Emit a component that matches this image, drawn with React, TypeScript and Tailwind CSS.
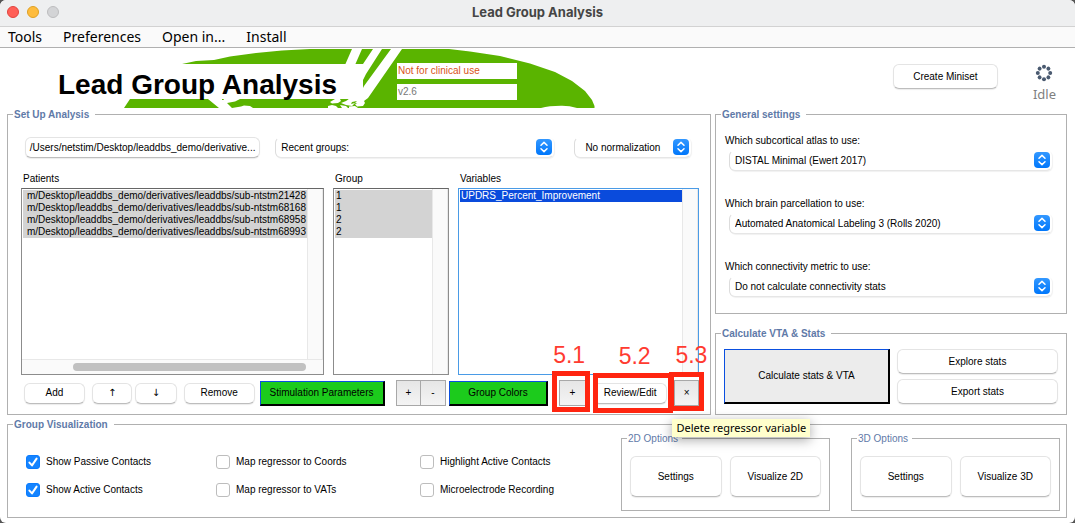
import React, { ReactNode } from "react";
import { clsx } from "clsx";

const patients = ["21428", "68168", "68958", "68993"];
const groups = ["1", "1", "2", "2"];

function Panel({ title, className, children, light }: { title: string; className?: string; children: ReactNode; light?: boolean }) {
  return (
    <fieldset className={clsx("min-w-0 border border-[#b0b0b0]", className)}>
      <legend
        className={clsx(
          "ml-[5px] h-[13px] pl-px leading-[13px] whitespace-nowrap text-[#5f7aa8]",
          light ? "pr-1 text-[10px]" : "pr-1.5 text-[10px] font-bold",
        )}
      >
        {title}
      </legend>
      {children}
    </fieldset>
  );
}

function PushButton({ children, className, label }: { children: ReactNode; className?: string; label?: string }) {
  return (
    <button
      type="button"
      aria-label={label}
      className={clsx(
        "min-w-0 rounded-md border border-[#e4e4e4] border-b-[#bdbdbd] bg-white p-0 text-center whitespace-nowrap shadow-[0_1px_1px_rgba(0,0,0,0.08)]",
        className,
      )}
    >
      {children}
    </button>
  );
}

function SquareButton({ children, label, className }: { children: ReactNode; label: string; className?: string }) {
  return (
    <button
      type="button"
      aria-label={label}
      className={clsx("h-[26px] min-w-0 border border-[#a8a8a8] bg-linear-to-b from-[#e6e6e6] to-[#f4f4f4] p-0", className)}
    >
      {children}
    </button>
  );
}

const raised = "min-w-0 border-t border-r-2 border-b-2 border-l border-t-[#0a4fe0] border-l-[#0a4fe0] border-r-black border-b-black p-0 whitespace-nowrap";

function Popup({ value, label, className, pad = "pl-[5px]", id }: { value: string; label?: string; className?: string; pad?: string; id?: string }) {
  return (
    <div className={clsx("relative h-[21px]", className)}>
      <select
        id={id}
        aria-label={label}
        className={clsx(
          "h-full w-full appearance-none rounded-md border border-transparent border-b-[#e6e6e6] border-l-[#dcdcdc] bg-white pr-6 shadow-[1px_1px_1px_rgba(0,0,0,0.06)]",
          pad,
        )}
      >
        <option>{value}</option>
      </select>
      <svg className="pointer-events-none absolute top-[2px] right-[2px] h-4 w-4" viewBox="0 0 16 16" aria-hidden="true">
        <defs>
          <linearGradient id="popupBlue" x1="0" y1="0" x2="0" y2="1">
            <stop offset="0" stopColor="#3398ff" />
            <stop offset="1" stopColor="#0077fb" />
          </linearGradient>
        </defs>
        <rect width="16" height="16" rx="4" fill="url(#popupBlue)" />
        <path d="M5 6.2 8 3.4l3 2.8M5 9.8l3 2.8 3-2.8" fill="none" stroke="#fff" strokeWidth="1.5" strokeLinecap="round" strokeLinejoin="round" />
      </svg>
    </div>
  );
}

function ListFrame({ title, children, blue, horizontal }: { title: string; children: ReactNode; blue?: boolean; horizontal?: boolean }) {
  return (
    <div className="min-w-0">
      <div className="pl-0.5 leading-3">{title}</div>
      <div className={clsx("mt-[3px] flex h-[187px] flex-col border bg-white", blue ? "border-[#4a9be6]" : "border-[#8c8c8c] border-t-[#666]")}>
        <div className="flex min-h-0 flex-1 pl-px">
          <ul role="listbox" aria-label={title} className="min-w-0 flex-1 overflow-hidden pt-px leading-3">
            {children}
          </ul>
          <div className="w-4 border-x border-[#e8e8e8] bg-[#fafafa]" />
        </div>
        {horizontal && (
          <div className="flex h-[15px] border-t border-[#e8e8e8] bg-[#fafafa] pt-[3px] pr-[17px]">
            <div className="ml-auto h-2 w-[82%] rounded-full bg-[#c1c1c1]" />
          </div>
        )}
      </div>
    </div>
  );
}

function Check({ label, checked }: { label: string; checked?: boolean }) {
  return (
    <label className="flex h-[14px] items-center gap-1.5 leading-[14px] whitespace-nowrap">
      <span className="grid h-[14px] w-[14px]">
        <input
          type="checkbox"
          defaultChecked={checked}
          className="peer col-start-1 row-start-1 h-[14px] w-[14px] appearance-none rounded-[3px] border border-[#bdbdbd] bg-white checked:border-[#0a7cff] checked:bg-[#1584ff]"
        />
        <svg viewBox="0 0 14 14" className="pointer-events-none col-start-1 row-start-1 hidden h-[14px] w-[14px] peer-checked:block" aria-hidden="true">
          <path d="M3.4 7.6 6 10.4 10.6 3.6" fill="none" stroke="#fff" strokeWidth="2" strokeLinecap="round" strokeLinejoin="round" />
        </svg>
      </span>
      {label}
    </label>
  );
}

function Mark({ text, box, caption }: { text: string; box: string; caption: string }) {
  return (
    <>
      <span className={clsx("pointer-events-none absolute z-10 border-[5px] border-[#ff2510]", box)} />
      <span className={clsx("pointer-events-none absolute z-10 text-[23px] leading-6 text-[#ff3b30]", caption)}>{text}</span>
    </>
  );
}

function Logo() {
  return (
    <svg className="absolute top-px left-[124px] h-[59px] w-[471px]" viewBox="124 49 471 59" aria-hidden="true">
      <path
        fill="#5ab400"
        d="M182 64 196 61 214 60 230 56.500 256 53 282 50.500 310 49H449L470 51.500 500 56 530 63.500 555 72 572 81 585 91 592 100 594.500 106V108H577Q569 105.500 561 105.700 549 105.700 541 108H253L250 106 244 105.500 241 106.500 232 108 227 103 235 101.500 242 98H363V64Z"
      />
      <path fill="#5ab400" d="M130 99h78l11 9h-95zM222 99h1.500l.5 1h-2z" />
      <path fill="#fff" d="M182 64h181v35H182zM352 49h10l-7 16h-10zM373 49h9L366 74l-3 6V64zM391 49h11L368 98l-8 6-12-4 15-12 1-2z" />
      <path
        fill="#fff"
        d="m330 102 5-3h5l1 2-3 2-6 .5zM341 103l5-2 3-2h14l2 4-5-1-5 1-3 3-6-1zM328 106l4-1 4 1 2 2h-10zM340 105l6 1 2 2h-6zM355 104l5-2 5 1-2 3-6 .5zM349 106.500l6-.5 3 2h-9z"
      />
      <path fill="#5ab400" d="m341 99.500 4 0-1 1.500h-3zM352 102l5-1-2 2-4 1z" />
    </svg>
  );
}

const dots = [0, 1, 2, 3, 4, 5, 6, 7];
const settings = [
  ["atlas", "Which subcortical atlas to use:", "DISTAL Minimal (Ewert 2017)"],
  ["parcellation", "Which brain parcellation to use:", "Automated Anatomical Labeling 3 (Rolls 2020)"],
  ["metric", "Which connectivity metric to use:", "Do not calculate connectivity stats"],
];

export default function App() {
  return (
    <div className="min-h-screen bg-[#555]">
      <div className="flex min-h-screen flex-col overflow-hidden rounded-md bg-white font-['Liberation_Sans',Arial,sans-serif] text-[10px] leading-3 text-black">
        <div className="grid h-[27px] grid-cols-[1fr_auto_1fr] items-center border-b border-[#d2d2d2] bg-[#eeeff0] pb-0.5">
          <div className="flex gap-2 pl-[7px]">
            <button type="button" aria-label="Close" className="h-3 w-3 rounded-full border border-[#e0443e] bg-[#ff5f57]" />
            <button type="button" aria-label="Minimize" className="h-3 w-3 rounded-full border border-[#dfa023] bg-[#febc3d]" />
            <button type="button" aria-label="Zoom" className="h-3 w-3 rounded-full border border-[#bcbcbe] bg-[#d3d4d6]" />
          </div>
          <h1 className="font-['Inter',sans-serif] text-[13px] leading-4 font-bold text-[#454545]">Lead Group Analysis</h1>
        </div>
        <nav className="flex h-[21px] items-center gap-[21px] border-b border-[#b0b0b0] bg-[#fafafa] pl-2 font-['Noto_Sans',sans-serif] text-[14px] leading-5">
          <button type="button">Tools</button>
          <button type="button">Preferences</button>
          <button type="button">Open in...</button>
          <button type="button">Install</button>
        </nav>

        <header className="relative flex h-[60px] items-start">
          <Logo />
          <h2 className="relative mt-4 h-[35px] w-[363px] pl-[58px] text-[28px] leading-[41px] font-bold whitespace-nowrap">Lead Group Analysis</h2>
          <div className="relative mt-[15px] ml-[34px] flex w-[120px] flex-col gap-[5px] leading-4">
            <div className="bg-white pl-px text-[#d95319]">Not for clinical use</div>
            <div className="bg-white pl-px text-[#777]">v2.6</div>
          </div>
          <div className="mr-[19px] ml-auto flex items-start gap-[35px] pt-4">
            <PushButton className="h-[25px] w-[105px]">Create Miniset</PushButton>
            <div className="flex flex-col items-center gap-1">
              <svg className="h-[18px] w-[18px]" viewBox="-9 -9 18 18" aria-hidden="true">
                {dots.map((i) => (
                  <circle key={i} r="2" cy="-6.200" fill="#4a5a70" transform={`rotate(${i * 45})`} />
                ))}
              </svg>
              <span className="font-['Noto_Sans',sans-serif] text-[13px] leading-4 text-[#7f7f7f]">Idle</span>
            </div>
          </div>
        </header>

        <main className="flex flex-col gap-[3px] pr-2 pl-[7px]">
          <div className="grid grid-cols-[704fr_352fr] gap-1">
            <Panel title="Set Up Analysis" className="h-full">
              <div className="pr-[11px] pb-2 pl-[13px]">
                <div className="flex pt-4 pr-2 pl-1">
                  <PushButton className="h-[21px] flex-[234]">/Users/netstim/Desktop/leaddbs_demo/derivative...</PushButton>
                  <Popup className="ml-[15px] flex-[280]" label="Recent groups" value="Recent groups:" />
                  <Popup className="ml-5 flex-[117]" label="Normalization" value="No normalization" pad="pl-2.5" />
                </div>
                <div className="mt-[15px] grid grid-cols-[303fr_116fr_241fr] gap-x-[9px]">
                  <ListFrame title="Patients" horizontal>
                    {patients.map((id) => (
                      <li key={id} role="option" aria-selected="true" className="flex justify-end bg-[#d3d3d3] pr-px whitespace-nowrap">
                        m/Desktop/leaddbs_demo/derivatives/leaddbs/sub-ntstm{id}
                      </li>
                    ))}
                  </ListFrame>
                  <ListFrame title="Group">
                    {groups.map((g, i) => (
                      <li key={i} role="option" aria-selected="true" className="bg-[#d3d3d3] pl-px">
                        {g}
                      </li>
                    ))}
                  </ListFrame>
                  <ListFrame title="Variables" blue>
                    <li role="option" aria-selected="true" className="bg-[#0a4bdc] pl-px text-white">
                      UPDRS_Percent_Improvement
                    </li>
                  </ListFrame>
                </div>
                <div className="mt-[5px] flex items-center pl-[3px]">
                  <PushButton className="h-[21px] flex-[60]">Add</PushButton>
                  <PushButton className="ml-[7px] h-[21px] flex-[39]" label="Move up">
                    <span className="font-['DejaVu_Sans']">↑</span>
                  </PushButton>
                  <PushButton className="ml-[3px] h-[21px] flex-[40]" label="Move down">
                    <span className="font-['DejaVu_Sans']">↓</span>
                  </PushButton>
                  <PushButton className="ml-[7px] h-[21px] flex-[70]">Remove</PushButton>
                  <button type="button" className={clsx("ml-[5px] h-[25px] flex-[124] bg-[#1ccb1c]", raised)}>Stimulation Parameters</button>
                  <SquareButton label="Add group" className="ml-[11px] flex-[24]">+</SquareButton>
                  <SquareButton label="Remove group" className="-ml-px flex-[24]">-</SquareButton>
                  <button type="button" className={clsx("ml-[3px] h-[25px] flex-[98] bg-[#1ccb1c]", raised)}>Group Colors</button>
                  <div className="relative ml-[11px] flex flex-[27]">
                    <SquareButton label="Add regressor variable" className="flex-1">+</SquareButton>
                    <Mark text="5.1" box="-top-[9px] -right-[4px] -bottom-[6px] -left-[7px]" caption="-top-[37px] -left-[6px]" />
                  </div>
                  <div className="relative ml-[7px] flex flex-[76]">
                    <PushButton className="h-[21px] flex-1">Review/Edit</PushButton>
                    <Mark text="5.2" box="-top-[10px] -right-[6px] -bottom-[9px] left-0" caption="-top-[39px] left-[26px]" />
                  </div>
                  <div className="relative ml-[7px] flex flex-[25]">
                    <SquareButton label="Delete regressor variable" className="flex-1">×</SquareButton>
                    <Mark text="5.3" box="-top-[8px] -right-[5px] -bottom-[5px] -left-[5px]" caption="-top-[37px] left-[1px]" />
                    <span
                      role="tooltip"
                      className="absolute top-[39px] -left-[2px] z-20 bg-[#ffffcc] px-1 font-['Noto_Sans',sans-serif] text-[11px] leading-[18px] whitespace-nowrap shadow-[0_3px_12px_rgba(0,0,0,0.35)]"
                    >
                      Delete regressor variable
                    </span>
                  </div>
                </div>
              </div>
            </Panel>

            <div className="flex min-w-0 flex-col gap-[13px]">
              <Panel title="General settings">
                <div className="flex flex-col gap-[27px] pt-[14px] pr-[14px] pb-4 pl-[9px]">
                  {settings.map(([id, question, value]) => (
                    <div key={id} className="flex flex-col gap-[3px]">
                      <label htmlFor={id}>{question}</label>
                      <Popup id={id} value={value} className="ml-[4px]" />
                    </div>
                  ))}
                </div>
              </Panel>
              <Panel title="Calculate VTA & Stats" className="flex-1">
                <div className="flex gap-[7px] px-2 pt-[9px] pb-2">
                  <button type="button" className={clsx("h-[55px] flex-[163] bg-[#ececec]", raised)}>Calculate stats &amp; VTA</button>
                  <div className="flex flex-[161] flex-col justify-between">
                    <PushButton className="h-[25px]">Explore stats</PushButton>
                    <PushButton className="h-[25px]">Export stats</PushButton>
                  </div>
                </div>
              </Panel>
            </div>
          </div>

          <Panel title="Group Visualization">
            <div className="flex items-start pr-1.5 pb-1.5 pl-[18px]">
              <div className="grid flex-[595] grid-cols-[190fr_204fr_201fr] gap-y-[14px] pt-6">
                <Check label="Show Passive Contacts" checked />
                <Check label="Map regressor to Coords" />
                <Check label="Highlight Active Contacts" />
                <Check label="Show Active Contacts" checked />
                <Check label="Map regressor to VATs" />
                <Check label="Microelectrode Recording" />
              </div>
              {["2D", "3D"].map((dim, i) => (
                <div key={dim} className={clsx("flex-[209] pt-px", i === 1 && "ml-[21px]")}>
                  <Panel title={`${dim} Options`} light>
                    <div className="grid grid-cols-2 gap-2 px-[8px] pt-[11px] pb-[13px]">
                      <PushButton className="h-[41px]">Settings</PushButton>
                      <PushButton className="h-[41px]">Visualize {dim}</PushButton>
                    </div>
                  </Panel>
                </div>
              ))}
            </div>
          </Panel>
        </main>
      </div>
    </div>
  );
}
